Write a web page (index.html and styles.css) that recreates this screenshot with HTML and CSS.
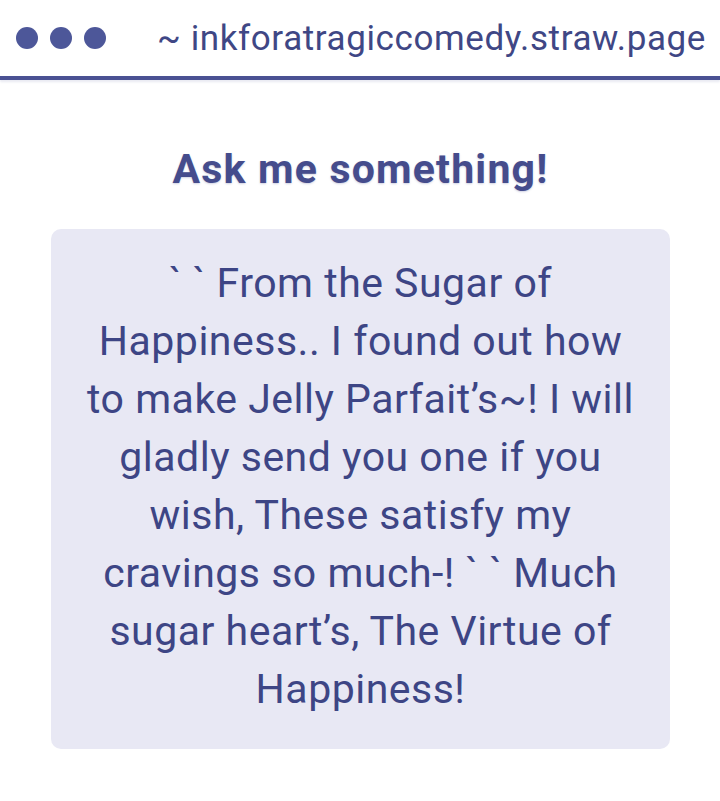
FILE: index.html
```html
<!DOCTYPE html>
<html lang="en">
<head>
<meta charset="utf-8">
<title>inkforatragiccomedy.straw.page</title>
<link rel="stylesheet" href="styles.css">
</head>
<body>
<header class="topbar">
  <div class="dots">
    <span class="dot"></span>
    <span class="dot"></span>
    <span class="dot"></span>
  </div>
  <div class="url">~ inkforatragiccomedy.straw.page</div>
</header>
<main class="content">
  <h1 class="title">Ask me something!</h1>
  <div class="card">
    <p class="message">` ` From the Sugar of Happiness.. I found out how to make Jelly Parfait’s~! I will gladly send you one if you wish, These satisfy my cravings so much-! ` ` Much sugar heart’s, The Virtue of Happiness!</p>
  </div>
</main>
</body>
</html>
```

FILE: styles.css
```css
html, body {
  margin: 0;
  padding: 0;
  background: #ffffff;
}

body {
  font-family: Roboto, "Liberation Sans", sans-serif;
  color: #3f4785;
}

.topbar {
  height: 76px;
  display: flex;
  align-items: center;
  justify-content: space-between;
  padding: 0 14px 0 16px;
  border-bottom: 4px solid #4a5193;
  box-shadow: 0 2px 2px rgba(74, 81, 147, 0.12);
}

.dots {
  display: flex;
  gap: 12px;
}

.dot {
  width: 22px;
  height: 22px;
  border-radius: 50%;
  background: #4d5799;
}

.url {
  font-size: 35px;
  letter-spacing: 0.6px;
  color: #3f4785;
}

.content {
  display: flex;
  flex-direction: column;
  align-items: center;
  padding: 65px 50px 40px 51px;
}

.title {
  margin: 0 0 36px;
  font-size: 41px;
  font-weight: 700;
  letter-spacing: 1.2px;
  color: #454c8c;
  text-shadow: 0 1px 2px rgba(69, 76, 140, 0.25);
}

.card {
  align-self: stretch;
  background: #e8e8f4;
  border-radius: 10px;
  padding: 25px 34px 31px;
}

.message {
  margin: 0;
  font-size: 41px;
  line-height: 58px;
  letter-spacing: 0.5px;
  text-align: center;
  color: #3d4585;
}
```
